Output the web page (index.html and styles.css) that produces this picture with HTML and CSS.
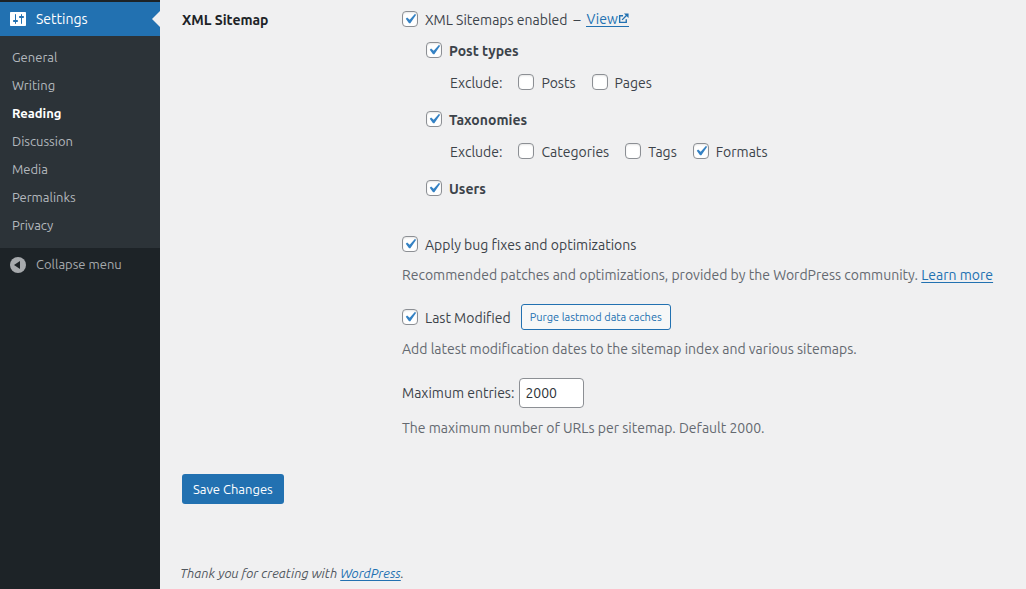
FILE: index.html
```html
<!DOCTYPE html>
<html lang="en">
<head>
<meta charset="utf-8">
<meta name="viewport" content="width=device-width, initial-scale=1">
<title>Reading Settings</title>
<link rel="stylesheet" href="styles.css">
</head>
<body>
<div class="admin">
  <nav class="menu" aria-label="Main menu">
    <a class="menu-current" href="#">
      <svg class="menu-icon" viewBox="0 0 20 20" aria-hidden="true"><path fill="currentColor" d="M18 16V4c0-.6-.4-1-1-1H3c-.6 0-1 .4-1 1v12c0 .6.4 1 1 1h14c.6 0 1-.4 1-1zM8 11h1c.55 0 1 .45 1 1s-.45 1-1 1H8v1.500c0 .28-.22.5-.5.5s-.5-.22-.5-.5V13H6c-.55 0-1-.45-1-1s.45-1 1-1h1V5.500c0-.28.22-.5.5-.5s.5.22.5.5V11zm5-2h-1c-.55 0-1-.45-1-1s.45-1 1-1h1V5.500c0-.28.22-.5.5-.5s.5.22.5.5V7h1c.55 0 1 .45 1 1s-.45 1-1 1h-1v5.500c0 .28-.22.5-.5.5s-.5-.22-.5-.5V9z"/></svg>
      <span>Settings</span>
    </a>
    <ul class="submenu">
      <li><a href="#">General</a></li>
      <li><a href="#">Writing</a></li>
      <li><a class="is-current" href="#" aria-current="page">Reading</a></li>
      <li><a href="#">Discussion</a></li>
      <li><a href="#">Media</a></li>
      <li><a href="#">Permalinks</a></li>
      <li><a href="#">Privacy</a></li>
    </ul>
    <button class="collapse" type="button">
      <svg class="menu-icon" viewBox="0 0 20 20" aria-hidden="true"><circle cx="10" cy="10" r="8" fill="currentColor"/><path fill="#1d2327" d="M12 6v8l-6-4z"/></svg>
      <span>Collapse menu</span>
    </button>
  </nav>
  <main class="content">
    <form class="form">
      <div class="setting">
        <h2 class="setting-title">XML Sitemap</h2>
        <fieldset class="fields" aria-label="XML Sitemap">
          <div class="row">
            <label class="option"><input type="checkbox" checked>XML Sitemaps enabled</label>
            <span>–</span>
            <a class="link view" href="#">View<svg class="external" viewBox="0 0 12 12" aria-hidden="true"><path fill="none" stroke="currentColor" stroke-width="1.500" d="M5.500 3H1.800v7.200H9V6.800M4.500 7.500l5.500-5.500"/><path fill="currentColor" d="M6.500.5h5v5L9.800 3.900 8.100 2.200z"/></svg></a>
          </div>
          <div class="group">
            <label class="option strong"><input type="checkbox" checked>Post types</label>
            <div class="row exclude">
              <span>Exclude:</span>
              <label class="option"><input type="checkbox">Posts</label>
              <label class="option"><input type="checkbox">Pages</label>
            </div>
            <label class="option strong"><input type="checkbox" checked>Taxonomies</label>
            <div class="row exclude">
              <span>Exclude:</span>
              <label class="option"><input type="checkbox">Categories</label>
              <label class="option"><input type="checkbox">Tags</label>
              <label class="option"><input type="checkbox" checked>Formats</label>
            </div>
            <label class="option strong"><input type="checkbox" checked>Users</label>
          </div>
          <div class="row"><label class="option"><input type="checkbox" checked>Apply bug fixes and optimizations</label></div>
          <p class="description">Recommended patches and optimizations, provided by the WordPress community. <a class="link" href="#">Learn more</a></p>
          <div class="row lastmod">
            <label class="option"><input type="checkbox" checked>Last Modified</label>
            <button class="button-small" type="button">Purge lastmod data caches</button>
          </div>
          <p class="description">Add latest modification dates to the sitemap index and various sitemaps.</p>
          <div class="row entries">
            <label for="max-entries">Maximum entries:</label>
            <input class="number" id="max-entries" type="text" inputmode="numeric" value="2000">
          </div>
          <p class="description">The maximum number of URLs per sitemap. Default 2000.</p>
        </fieldset>
      </div>
      <button class="button-primary" type="submit">Save Changes</button>
    </form>
    <footer class="footer">Thank you for creating with <a class="link" href="#">WordPress</a>.</footer>
  </main>
</div>
</body>
</html>
```
FILE: styles.css
```css
* { box-sizing: border-box; }

body {
  margin: 0;
  background: #f0f0f1;
  color: #3c434a;
  font: 14px/20px Ubuntu, "Noto Sans", sans-serif;
}

button, input { font-family: inherit; }

.admin {
  display: grid;
  grid-template-columns: 160px 1fr;
  min-height: 100vh;
}

/* Side menu */
.menu {
  padding-top: 2px;
  background: #1d2327;
}

.menu-current, .collapse {
  display: flex;
  align-items: center;
  gap: 8px;
  width: 100%;
  height: 34px;
  padding: 0 8px;
  text-decoration: none;
}

.menu-current {
  background: #2271b1;
  color: #fff;
  position: relative;
}

.menu-current::after {
  content: "";
  position: absolute;
  top: 9px;
  right: 0;
  border: 8px solid transparent;
  border-left: 0;
  border-right-color: #f0f0f1;
}

.menu-icon {
  flex: none;
  width: 20px;
  height: 20px;
}

.submenu {
  display: flex;
  flex-direction: column;
  margin: 0;
  padding: 7px 0 9px;
  background: #2c3338;
  list-style: none;
  font-size: 13px;
  line-height: 18px;
}

.submenu a {
  display: block;
  padding: 5px 12px;
  color: #b4b9be;
  text-decoration: none;
}

.submenu .is-current {
  color: #fff;
  font-weight: 600;
}

.collapse {
  align-items: flex-start;
  padding-top: 7px;
  border: 0;
  background: none;
  color: #a7aaad;
  font-size: 13px;
  line-height: 18px;
}

/* Settings form */
.content {
  display: flex;
  flex-direction: column;
  justify-content: space-between;
  padding: 10px 20px 6px;
}

.form { padding-left: 2px; }

.setting {
  display: grid;
  grid-template-columns: 220px 1fr;
}

.setting-title {
  margin: 0;
  color: #1d2327;
  font-size: 14px;
  font-weight: 600;
  line-height: 20px;
}

.fields {
  min-width: 0;
  margin: 0;
  padding: 0;
  border: 0;
}

.row {
  display: flex;
  align-items: center;
  gap: 6px;
}

.option {
  display: flex;
  align-items: center;
  gap: 7px;
}

.strong { font-weight: 600; }

.group {
  display: flex;
  flex-direction: column;
  gap: 12px;
  padding: 11px 0 36px 24px;
}

.exclude {
  gap: 16px;
  padding: 0 0 5px 24px;
}

input[type="checkbox"] {
  flex: none;
  appearance: none;
  width: 16px;
  height: 16px;
  margin: 0 0 2px;
  border: 1px solid #8c8f94;
  border-radius: 4px;
  background: #fff;
  box-shadow: inset 0 1px 2px rgba(0, 0, 0, .1);
}

input[type="checkbox"]:checked {
  background: #fff url("data:image/svg+xml,%3Csvg xmlns='http://www.w3.org/2000/svg' viewBox='0 0 20 20'%3E%3Cpath d='M14.830 4.890l1.340.94-5.810 8.380H9.020L5.780 9.670l1.340-1.250 2.570 2.400z' fill='%233582c4'/%3E%3C/svg%3E") center / 20px no-repeat;
}

.link { color: #2271b1; text-underline-offset: 2px; }

.view {
  display: flex;
  align-items: flex-start;
  border-bottom: 1px solid #2271b1;
  line-height: 13px;
  text-decoration: none;
}

.external {
  width: 11px;
  height: 11px;
}

.description {
  margin: 10px 0 0;
  color: #646970;
}

.lastmod { padding-top: 19px; gap: 10px; }
.lastmod .option { padding-top: 2px; }
.lastmod + .description { margin-top: 9px; }

.button-small {
  height: 26px;
  padding: 0 8px;
  border: 1px solid #2271b1;
  border-radius: 3px;
  background: #f6f7f7;
  color: #2271b1;
  font-size: 11px;
}

.entries { padding-top: 19px; gap: 5px; }

.number {
  width: 65px;
  height: 30px;
  padding: 0 5px;
  border: 1px solid #8c8f94;
  border-radius: 4px;
  background: #fff;
  color: #2c3338;
  font-size: 14px;
}

.button-primary {
  height: 30px;
  margin-top: 36px;
  padding: 0 11px;
  border: 0;
  border-radius: 3px;
  background: #2271b1;
  color: #fff;
  font-size: 13px;
}

.footer {
  color: #50575e;
  font-size: 13px;
  font-style: italic;
}
```
